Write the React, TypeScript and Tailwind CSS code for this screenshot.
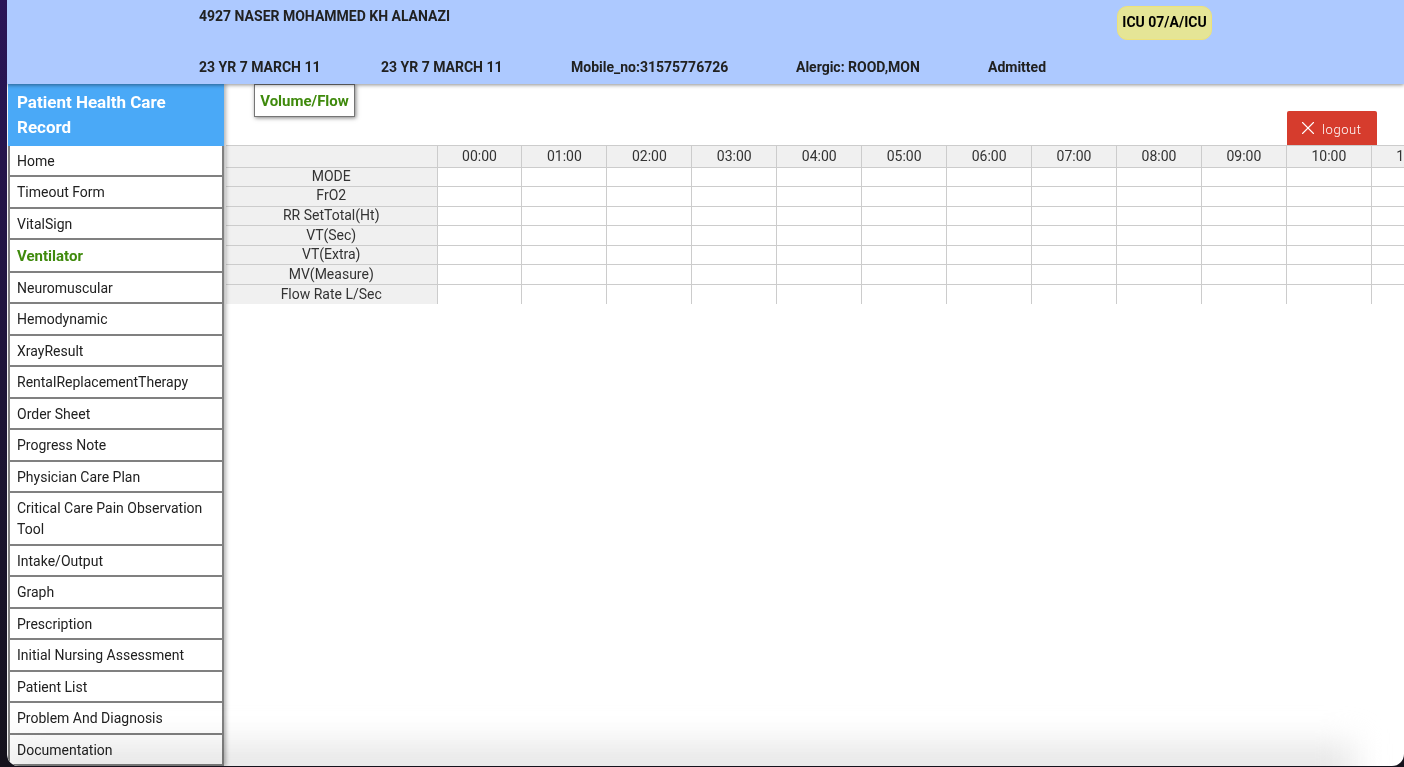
import { X } from "lucide-react";

const menu = [
  "Home",
  "Timeout Form",
  "VitalSign",
  "Ventilator",
  "Neuromuscular",
  "Hemodynamic",
  "XrayResult",
  "RentalReplacementTherapy",
  "Order Sheet",
  "Progress Note",
  "Physician Care Plan",
  "Critical Care Pain Observation Tool",
  "Intake/Output",
  "Graph",
  "Prescription",
  "Initial Nursing Assessment",
  "Patient List",
  "Problem And Diagnosis",
  "Documentation",
];

const hours = ["00:00", "01:00", "02:00", "03:00", "04:00", "05:00", "06:00", "07:00", "08:00", "09:00", "10:00", "11:00"];
const rows = ["MODE", "FrO2", "RR SetTotal(Ht)", "VT(Sec)", "VT(Extra)", "MV(Measure)", "Flow Rate L/Sec"];

export default function App() {
  return (
    <div className="h-screen overflow-hidden bg-gradient-to-b from-[#2a1458] to-[#15121c] pl-[7px] pb-px font-['Roboto',sans-serif]">
      <div className="relative flex h-full flex-col overflow-hidden rounded-b-xl bg-white">
        <header className="relative z-20 flex h-[84px] shrink-0 flex-col bg-[#adc9ff] pl-[192px] text-sm font-bold text-[#212121] shadow-[0_1px_4px_rgba(0,0,0,0.45)]">
          <div className="flex h-[50px] items-start">
            <span className="mt-[6px] w-[918px]">4927 NASER MOHAMMED KH ALANAZI</span>
            <span className="mt-[6px] flex h-[34px] w-[95px] items-start justify-center rounded-[10px] border border-[#eee27a] bg-[#e5e596] pt-[4.5px] text-black">
              ICU 07/A/ICU
            </span>
          </div>
          <div className="flex pt-[7px]">
            <span className="w-[182px]">23 YR 7 MARCH 11</span>
            <span className="w-[190px]">23 YR 7 MARCH 11</span>
            <span className="w-[225px]">Mobile_no:31575776726</span>
            <span className="w-[192px]">Alergic: ROOD,MON</span>
            <span>Admitted</span>
          </div>
        </header>

        <div className="flex min-h-0 flex-1">
          <nav className="relative z-10 ml-px w-[216px] shrink-0 bg-white text-sm text-[#212121] shadow-[2px_0_4px_rgba(0,0,0,0.3)]">
            <div className="h-[61.7px] bg-[#4aa9f7] px-[9px] pt-[6px] text-[17px] leading-[25px] font-bold text-white">
              Patient Health Care Record
            </div>
            {menu.map((item) => (
              <div
                key={item}
                className={
                  item === "Ventilator"
                    ? "border-2 border-t-0 border-[#808080] px-[7px] pt-[5.5px] pb-[4px] text-[15px] leading-[21px] font-bold text-[#3f8a0c]"
                    : "border-2 border-t-0 border-[#808080] px-[7px] pt-[5px] pb-[3.5px] leading-[21px] first:border-t-2"
                }
              >
                {item}
              </div>
            ))}
          </nav>

          <main className="min-w-0 flex-1">
            <div className="flex h-[61px] items-start justify-between">
              <div className="ml-[30px] flex h-[33px] w-[101px] items-start justify-center border border-[#757575] bg-white pt-[6px] text-[15px] leading-[20px] font-bold text-[#3f8a0c] shadow-[1px_1px_4px_rgba(0,0,0,0.5)]">
                Volume/Flow
              </div>
              <button className="mt-[27px] mr-[27px] flex h-[34px] w-[90px] items-center justify-start gap-[3px] rounded-t-[2px] bg-[#d63c2d] pl-[10px] text-[13px] tracking-[0.6px] text-white">
                <X size={22} strokeWidth={1.2} />
                <span className="pt-[3px] font-light">logout</span>
              </button>
            </div>
            <div className="overflow-hidden pl-[2px]">
              <table className="w-[1230.4px] table-fixed border-collapse text-sm leading-[19px] text-[#333333]">
                <thead>
                  <tr className="h-[21.5px]">
                    <th className="w-[211px] border border-l-0 border-[#cccccc] bg-[#f0f0f0]"></th>
                    {hours.map((h) => (
                      <th key={h} className="w-[84.95px] border border-[#cccccc] bg-[#f0f0f0] pt-px font-normal">
                        {h}
                      </th>
                    ))}
                  </tr>
                </thead>
                <tbody>
                  {rows.map((r) => (
                    <tr key={r} className="h-[19.6px]">
                      <td className="border border-b-0 border-l-0 border-[#cccccc] bg-[#f0f0f0] pb-[2px] text-center leading-[16px]">{r}</td>
                      {hours.map((h) => (
                        <td key={h} className="border border-[#cccccc] bg-white [tr:last-child_&]:border-b-0"></td>
                      ))}
                    </tr>
                  ))}
                </tbody>
              </table>
            </div>
          </main>
        </div>

        <div className="pointer-events-none absolute right-[50px] -bottom-[22px] left-0 z-30 h-[44px] bg-[#e6e6e6] mix-blend-multiply blur-lg"></div>
      </div>
    </div>
  );
}
